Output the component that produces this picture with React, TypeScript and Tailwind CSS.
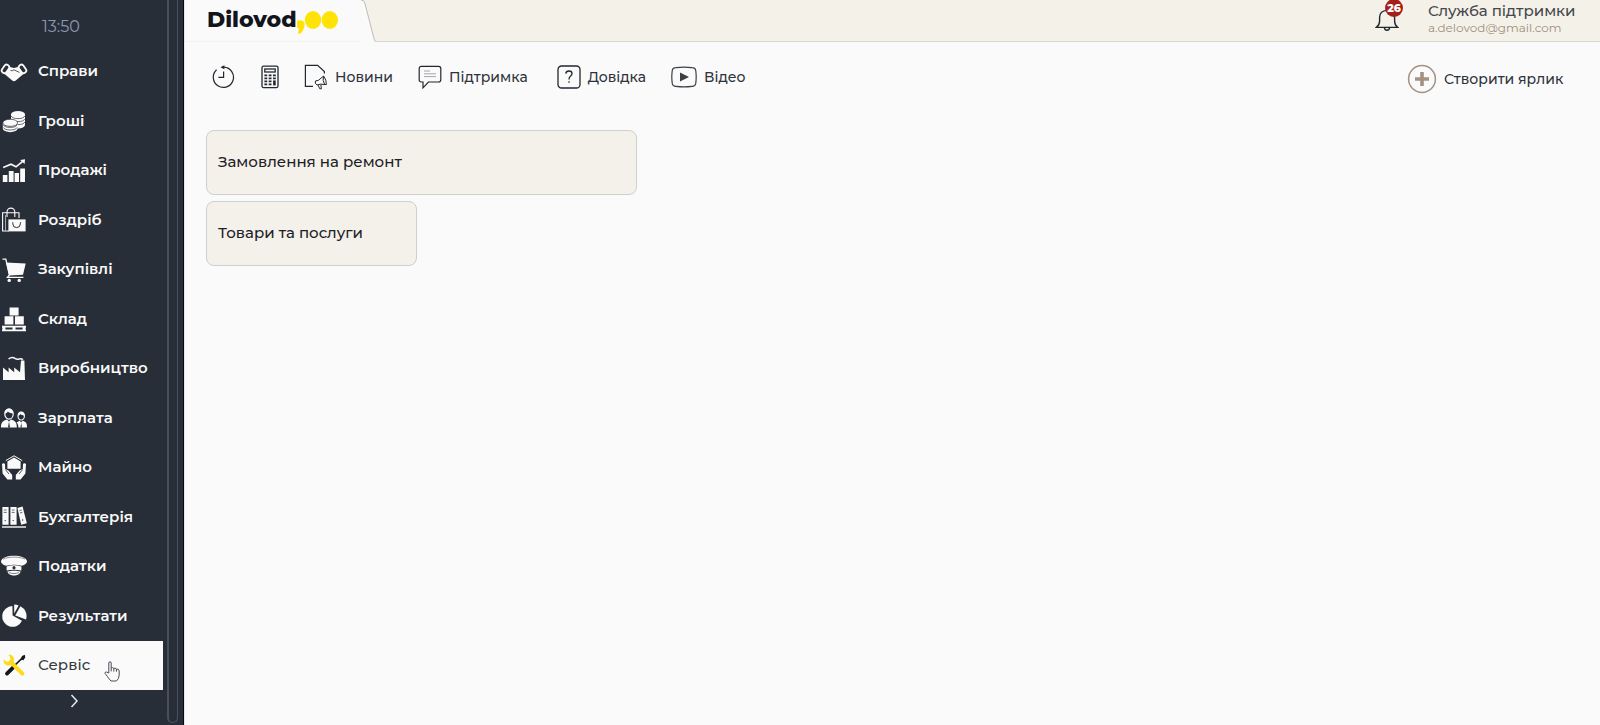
import type { ReactNode } from "react";

interface MenuItem {
  label: string;
  icon: ReactNode;
}

const menu: MenuItem[] = [
  {
    label: "Справи",
    icon: (
      <>
        <path d="M8 8.4 L14 10 L20 8.4 L24 15.6 L15.8 22.6 Q14 23.8 12.2 22.6 L4 15.6 Z" fill="#fafafa" />
        <rect x="2.8" y="6.4" width="5.2" height="9" rx="2.4" transform="rotate(34 5.4 11)" fill="#282e38" stroke="#fafafa" strokeWidth="1.8" />
        <rect x="20" y="6.4" width="5.2" height="9" rx="2.4" transform="rotate(-34 22.6 11)" fill="#282e38" stroke="#fafafa" strokeWidth="1.8" />
        <path d="M10.5 12.4 Q12 13.6 14 11.8 L19.4 14.4" fill="none" stroke="#282e38" strokeWidth=".8" />
      </>
    ),
  },
  {
    label: "Гроші",
    icon: (
      <>
        <path d="M11 7.5 V18 a7 3.4 0 0 0 14 0 V7.5Z" fill="#fafafa" />
        <ellipse cx="18" cy="7.4" rx="7" ry="3.4" fill="#fafafa" />
        <path d="M11.2 9 a7 3.4 0 0 0 13.6 0 M11.2 12 a7 3.4 0 0 0 13.6 0 M11.2 15 a7 3.4 0 0 0 13.6 0" fill="none" stroke="#282e38" strokeWidth=".7" />
        <path d="M2.8 16 V21.4 a7.4 3.8 0 0 0 14.8 0 V16Z" fill="#fafafa" />
        <ellipse cx="10.2" cy="15.8" rx="7.4" ry="3.6" fill="#fafafa" stroke="#282e38" strokeWidth=".7" />
        <path d="M3.2 17.8 a7.2 3.4 0 0 0 14 0 M3.2 20.4 a7.2 3.4 0 0 0 14 0" fill="none" stroke="#282e38" strokeWidth=".7" />
      </>
    ),
  },
  {
    label: "Продажі",
    icon: (
      <>
        <path d="M2.8 18h4.6v7H2.8z M8.8 14h4.8v11H8.8z M14.6 16h4.4v9h-4.4z M20.2 11.6H25V25h-4.8z" fill="#fafafa" />
        <path d="M3.2 10.5 L11 7.2 L16 9.8 L23 4.2" fill="none" stroke="#fafafa" strokeWidth="1.6" />
        <path d="M20.2 3 L25 2.2 L24.6 7Z" fill="#fafafa" />
      </>
    ),
  },
  {
    label: "Роздріб",
    icon: (
      <>
        <path d="M9 25 H2.6 V6.8 H19 V12" fill="none" stroke="#fafafa" strokeWidth="1.1" />
        <path d="M7 11 V6 a3.9 3.9 0 0 1 7.8 0 V11" fill="none" stroke="#fafafa" strokeWidth="1.1" />
        <path d="M5.5 24.5 V9" stroke="#fafafa" strokeWidth=".6" />
        <path d="M8.4 13.4 H25.6 V25.4 H8.4Z" fill="#fafafa" />
        <path d="M12.8 16.2 v1.6 a3.8 3.8 0 0 0 7.6 0 v-1.6" fill="none" stroke="#282e38" strokeWidth="1" />
      </>
    ),
  },
  {
    label: "Закупівлі",
    icon: (
      <>
        <path d="M2.5 3.2 H5.8 L9.4 19 L7.4 21.4 H23.4" fill="none" stroke="#fafafa" strokeWidth="1.3" />
        <path d="M6 6.4 L25.7 7.4 L23 18.8 L9.2 19.4Z" fill="#fafafa" />
        <circle cx="9.2" cy="24.4" r="1.7" fill="#fafafa" />
        <circle cx="19.2" cy="24.4" r="1.7" fill="#fafafa" />
      </>
    ),
  },
  {
    label: "Склад",
    icon: (
      <>
        <path d="M9.6 2.4h9v8h-9z M4.6 11.2h8.8v8.2H4.6z M15 11.2h8.8v8.2H15z" fill="#fafafa" />
        <path d="M2 20.8h24v1.6H2z M2 24.6h24v1.6H2z M2.4 22h3v3h-3z M12.5 22h3v3h-3z M22.6 22h3v3h-3z" fill="#fafafa" />
      </>
    ),
  },
  {
    label: "Виробництво",
    icon: (
      <>
        <path d="M3 25 V12.4 L8.6 17.2 V12.4 L14.2 17.2 V12.4 L20 17.2 L21 5.6 H24.4 L25 25Z" fill="#fafafa" />
        <path d="M22.8 4.8 C21 2.2 18 5.4 15.4 3.6 C13 2 10.4 2.4 8.6 4" fill="none" stroke="#fafafa" strokeWidth="1.5" />
      </>
    ),
  },
  {
    label: "Зарплата",
    icon: (
      <>
        <path d="M1 23.6 C.8 18.4 3 17 7 15.6 L9 17.4 L11 15.6 C15 17 17 18.4 16.8 23.6Z" fill="#fafafa" />
        <ellipse cx="9" cy="10" rx="4.2" ry="5.2" fill="#282e38" stroke="#fafafa" strokeWidth="1.2" />
        <path d="M4.6 9.4 C4.6 3.2 13.4 3.2 13.4 9.4 C11.6 9.2 8.6 8.6 7.8 7.4 C7 8.8 6 9.4 4.6 9.4Z" fill="#fafafa" />
        <path d="M9 17.4 L8 23.4 H10Z" fill="#282e38" />
        <path d="M18.4 23.6 C18.6 20 17 19 16.6 18.4 L19.6 16.8 L21.2 18.2 L22.8 16.8 C26 18 27.2 19 27 23.6Z" fill="#fafafa" />
        <ellipse cx="21.2" cy="12" rx="3.2" ry="4" fill="#282e38" stroke="#fafafa" strokeWidth="1.1" />
        <path d="M17.8 11.6 C17.8 6.4 24.8 6.4 24.8 11.6 C23 11.4 21 11 20.4 10 C19.8 11 19 11.6 17.8 11.6Z" fill="#fafafa" />
        <path d="M21.2 18.4 L20.5 23.4 H21.9Z" fill="#282e38" />
      </>
    ),
  },
  {
    label: "Майно",
    icon: (
      <>
        <path d="M7.4 8.6 L14 4.6 L20.6 8.6 V15.8 H7.4Z" fill="#fafafa" />
        <path d="M5.8 7.6 L14 2.8 L22.2 7.6" fill="none" stroke="#fafafa" strokeWidth="1" />
        <path d="M2 11 Q3.6 9.4 5 11 L5.2 16 L8.4 17.4 L12.2 22 V26.4 H7.4 L2.6 20.6Z" fill="#fafafa" />
        <path d="M26 11 Q24.4 9.4 23 11 L22.8 16 L19.6 17.4 L15.8 22 V26.4 H20.6 L25.4 20.6Z" fill="#fafafa" />
        <path d="M5.4 16.6 L9 21 M22.6 16.6 L19 21" stroke="#282e38" strokeWidth=".8" />
      </>
    ),
  },
  {
    label: "Бухгалтерія",
    icon: (
      <>
        <path d="M2.4 4h6.2v17.8H2.4z M10.4 4h6.2v17.8h-6.2z" fill="#fafafa" />
        <path d="M17.4 5 L22.6 3.6 L26.8 20.2 L21.2 21.8Z" fill="#fafafa" />
        <path d="M2 24h24" stroke="#fafafa" strokeWidth="1.4" />
        <path d="M3.8 7h2.8 M3.8 9.4h2.8 M11.8 7h2.8 M11.8 9.4h2.8 M19.4 7.6l2.4-.6 M20 10l2.4-.6" stroke="#282e38" strokeWidth=".7" />
        <circle cx="5.2" cy="17.6" r=".7" fill="#282e38" />
        <circle cx="13.2" cy="17.6" r=".7" fill="#282e38" />
        <circle cx="22.6" cy="17" r=".7" fill="#282e38" />
      </>
    ),
  },
  {
    label: "Податки",
    icon: (
      <>
        <path d="M1 9.6 C1 5.6 8 3.8 14 3.8 C20 3.8 27 5.6 27 9.6 C27 11.6 24 13.4 21.6 13.8 C17 12.4 11 12.4 6.4 13.8 C4 13.4 1 11.6 1 9.6Z" fill="#fafafa" />
        <path d="M3 7.2 C8 4.4 20 4.4 25 7.2" fill="none" stroke="#282e38" strokeWidth=".5" />
        <path d="M6.6 14.4 C11 13 17 13 21.4 14.4 V18.4 C17 17.4 11 17.4 6.6 18.4Z" fill="#fafafa" />
        <path d="M7.4 19.4 C11 18.4 17 18.4 20.6 19.4 C20 22 17 23.4 14 23.4 C11 23.4 8 22 7.4 19.4Z" fill="#fafafa" />
        <path d="M14 13.8 l1.6 1.4 -.5 2 h-2.2 l-.5 -2Z" fill="#282e38" />
        <path d="M9 20.6 C12 21.8 16 21.8 19 20.6" fill="none" stroke="#282e38" strokeWidth=".6" />
      </>
    ),
  },
  {
    label: "Результати",
    icon: (
      <>
        <path d="M12.6 13.6 L12.4 4 A10.4 10.4 0 1 0 22 18.8Z" fill="#fafafa" />
        <path d="M14.2 11.6 V2.4 A9.6 9.6 0 0 1 18.6 3.4Z" fill="#fafafa" />
        <path d="M15.2 13.6 L20.4 4.2 A11 11 0 0 1 26 17.4Z" fill="#fafafa" />
      </>
    ),
  },
  {
    label: "Сервіс",
    icon: (
      <>
        <path d="M7 22.6 L13 16.6" stroke="#14171d" strokeWidth="3.8" strokeLinecap="round" />
        <path d="M13 16 L22 7.4" stroke="#14171d" strokeWidth="1.6" />
        <path d="M20.4 8.4 L22 5 L24.8 3.8 L25.2 6.4 L23.4 9.2Z" fill="#14171d" />
        <path d="M11 11.4 L22.4 22.6" stroke="#ffd91a" strokeWidth="4" strokeLinecap="round" />
        <path
          d="M8.4 3.4 C12.6 3.4 15 6.8 13.8 10.6 L14.4 12.4 L12 14.6 L10 14.2 C6 15.2 3 12.4 3.6 8.4 L6.6 10.8 L9 10.6 L10.4 8.6 L10.2 6.4Z"
          fill="#ffd91a"
        />
      </>
    ),
  },
];

const shortcuts = [
  { label: "Замовлення на ремонт", size: "w-[431px]" },
  { label: "Товари та послуги", size: "w-[211px]" },
];

function Sidebar() {
  return (
    <aside className="flex h-full w-[184px] shrink-0 border-r border-[#060a18] bg-[#282e38]">
      <div className="flex w-[163px] flex-col">
        <div className="flex h-[47px] items-center pt-1.5 pl-[42px] text-base text-[#8c98b4]">13:50</div>

        <nav className="flex flex-1 flex-col">
          {menu.map((item) => {
            const active = item.label === "Сервіс";
            return (
              <a
                key={item.label}
                href="#"
                className={
                  active
                    ? "relative flex flex-1 items-center gap-2.5 bg-[#fafafa] text-[15px] font-medium text-[#343a44]"
                    : "flex flex-1 items-center gap-2.5 text-[15px] font-semibold text-[#fafafa]"
                }
              >
                <svg viewBox="0 0 28 28" className="size-7 shrink-0">
                  {item.icon}
                </svg>
                {item.label}
                {active && <HandPointer />}
              </a>
            );
          })}
        </nav>

        <button aria-label="Згорнути" className="flex h-[35px] items-start justify-center pt-1">
          <svg viewBox="0 0 14 14" className="mr-4 size-3.5" fill="none" stroke="#e8e9eb" strokeWidth="1.5">
            <path d="M4.5 1 L10 7 L4.5 13" />
          </svg>
        </button>
      </div>

      {/* Scroll track */}
      <div className="mb-0.5 ml-1 w-[11px] rounded-b-full border-r border-b border-l-2 border-[#4a505a]" />
    </aside>
  );
}

function HandPointer() {
  return (
    <svg viewBox="0 0 16 21" className="absolute top-5 left-[104px] h-[21px] w-4" fill="#fafafa" stroke="#4b4f58" strokeWidth="1">
      <path d="M4.8 12 V2 Q4.8 .8 6 .8 Q7.2 .8 7.2 2 V7 Q8.6 6 9.8 7.4 Q11.2 6.6 12.4 8 Q15 7.6 15.2 10 V14 Q15 18 12.4 20 H7 Q5 18 3.2 15.2 L1 12.4 Q.8 10.8 2.4 11Z" />
      <path d="M7.2 7 V10.4 M9.8 7.4 V10.6 M12.4 8 V10.8" fill="none" />
    </svg>
  );
}

function Header() {
  return (
    <header className="flex h-[42px]">
      <div className="flex w-[175px] items-center border-b border-dotted border-[#ececec] pb-0.5 pl-[22px]">
        <a href="#" className="flex items-center text-[22px] font-extrabold text-[#12151c]">
          Dilovod
          <svg viewBox="2 0 44 28" className="h-7 w-11" fill="#ffe206">
            <path d="M5.6 14.4 a4 4 0 0 1 4 4 C9.6 22 7.6 25.4 5.6 27.4 H2.8 L4 22.4 A4 4 0 0 1 5.6 14.4Z" />
            <ellipse cx="18" cy="14" rx="8.2" ry="9" />
            <ellipse cx="34.8" cy="14" rx="8.2" ry="9" />
          </svg>
        </a>
      </div>
      <svg viewBox="0 0 16 42" className="h-[42px] w-4 shrink-0">
        <path d="M1 0 Q4 0 4.8 3 L14 38.6 Q14.6 41.5 16 41.5 V0Z" fill="#f4f1e9" />
        <path d="M1 0 Q4 0 4.8 3 L14 38.6 Q14.6 41.5 16 41.5" fill="none" stroke="#bdbdbd" />
      </svg>
      <div className="flex flex-1 justify-end border-b border-[#d6d5d0] bg-[#f4f1e9]">
        <button aria-label="Сповіщення" className="relative mr-[25px] flex w-7 items-start pt-[7px]">
          <svg viewBox="0 0 24 24" className="size-6" fill="none" stroke="#23272f" strokeWidth="1.4">
            <path d="M1.4 20.4 H22.6 Q19.6 18 19.6 14 V10.4 Q19.6 4 12 3.4 Q4.6 4 4.6 10.4 V14 Q4.6 18 1.4 20.4Z" />
            <path d="M9.4 20.8 Q9.8 23.2 12 23.2 Q14.2 23.2 14.6 20.8" />
            <path d="M12 3.4 V1" />
          </svg>
          <span className="absolute -top-px left-2.5 flex size-[18px] items-center justify-center rounded-full bg-[#a4211b] text-[11px] font-extrabold text-white">
            26
          </span>
        </button>
        <div className="w-[172px]">
          <div className="text-[15px] leading-[22px] font-medium text-[#45474c]">Служба підтримки</div>
          <div className="text-xs leading-3 text-[#a08f7e]">a.delovod@gmail.com</div>
        </div>
      </div>
    </header>
  );
}

function Toolbar() {
  return (
    <div className="flex h-[70px] items-center pl-[27px] text-sm font-medium text-[#2e333b]">
      <button aria-label="Історія" className="mr-[25px]">
        <svg viewBox="0 0 24 24" className="size-6" fill="none" stroke="#23272f" strokeWidth="1.2">
          <path d="M4.6 4.8 A10.1 10.1 0 1 0 12 2.2" />
          <path d="M11.6 6.4 V12.4 H6.4" />
          <path d="M8.4 2.2 L12.4 .2 V4.2Z" fill="#23272f" stroke="none" />
        </svg>
      </button>
      <button aria-label="Калькулятор" className="mr-[25px]">
        <svg viewBox="0 0 18 24" className="h-6 w-[18px]" fill="none" stroke="#23272f" strokeWidth="1.3">
          <rect x="1" y="1.2" width="16" height="21.4" rx="1.5" />
          <rect x="3.8" y="4" width="10.4" height="3" />
          <path d="M3.4 10.4h2.8 M7.7 10.4h2.8 M12 10.4h2.8 M3.4 13.4h2.8 M7.7 13.4h2.8 M12 13.4h2.8 M3.4 16.4h2.8 M7.7 16.4h2.8 M3.4 19.4h2.8 M7.7 19.4h2.8" strokeWidth="1.9" />
          <path d="M13.4 15.4v5" strokeWidth="2.6" />
        </svg>
      </button>
      <button className="mr-[25px] flex items-center gap-[7px]">
        <svg viewBox="0 0 24 26" className="h-[26px] w-6" fill="none" stroke="#23272f" strokeWidth="1.2">
          <path d="M9 22.4 H1.4 V1.4 H13.6 L20.4 7.6 V9.4" />
          <path d="M11.4 17 L14.6 16.2 L19.6 12 Q22.6 16 22.4 20.6 L16.4 20.2 L13 21 Q10.6 19.6 11.4 17Z M14 21 L15.8 24.8 H17.4 L16.8 20.6" strokeWidth="1" />
          <path d="M19.4 12.4 Q18.4 16.4 20.6 20.4" strokeWidth="1" />
        </svg>
        Новини
      </button>
      <button className="mr-[29px] flex items-center gap-[7px]">
        <svg viewBox="0 0 24 24" className="size-6" fill="none" stroke="#23272f" strokeWidth="1.2">
          <path d="M3.4 1.4 H20.6 Q22.8 1.4 22.8 3.6 V14.8 Q22.8 17 20.6 17 H10.4 L5 22.8 V17 H3.4 Q1.2 17 1.2 14.8 V3.6 Q1.2 1.4 3.4 1.4Z" />
          <path d="M6 6h6 M6 8.8h12 M6 11.6h12" stroke="#a3a5a9" strokeWidth="1" />
        </svg>
        Підтримка
      </button>
      <button className="mr-[25px] flex items-center gap-[7px]">
        <svg viewBox="0 0 24 24" className="size-6" fill="none" stroke="#23272f" strokeWidth="1.3">
          <rect x="1" y="1" width="22" height="22" rx="3.6" />
          <path d="M8.8 8.6 Q9 6 12 6 Q15 6 15 8.6 Q15 10 13.4 11.2 Q12 12.2 12 14.4 M12 16.2 V17.8" />
        </svg>
        Довідка
      </button>
      <button className="flex items-center gap-[7px]">
        <svg viewBox="0 0 26 22" className="h-[22px] w-[26px]" fill="none" stroke="#3b3f47" strokeWidth="1.2">
          <path d="M5 1.6 Q13 .6 21 1.6 Q24.6 1.8 24.8 5 Q25.6 11 24.8 17 Q24.6 20.2 21 20.4 Q13 21.4 5 20.4 Q1.4 20.2 1.2 17 Q.4 11 1.2 5 Q1.4 1.8 5 1.6Z" />
          <path d="M9 6.4 L18 11 L9 15.6Z" fill="#3b3f47" stroke="none" />
        </svg>
        Відео
      </button>

      <button className="mt-1 ml-auto flex w-[193px] items-center gap-[7px]">
        <svg viewBox="0 0 30 30" className="size-[30px]" fill="none" stroke="#a39282">
          <circle cx="15" cy="15" r="13.4" strokeWidth="1.5" />
          <path d="M8 15 H22 M15 8 V22" strokeWidth="3.6" />
        </svg>
        Створити ярлик
      </button>
    </div>
  );
}

export default function App() {
  return (
    <div className="flex h-screen bg-[#fafafa] font-['Montserrat','Inter',sans-serif]">
      <Sidebar />
      <div className="flex min-w-0 flex-1 flex-col border-l border-[#e6e6e6]">
        <Header />
        <Toolbar />
        <main className="flex flex-col items-start gap-1.5 pt-[18px] pl-[21px]">
          {shortcuts.map((s) => (
            <button
              key={s.label}
              className={`${s.size} h-[65px] rounded-lg border border-[#cfcfcf] bg-[#f4f1ea] px-[11px] text-left text-[15px] font-medium text-[#1d2027]`}
            >
              {s.label}
            </button>
          ))}
        </main>
      </div>
    </div>
  );
}
